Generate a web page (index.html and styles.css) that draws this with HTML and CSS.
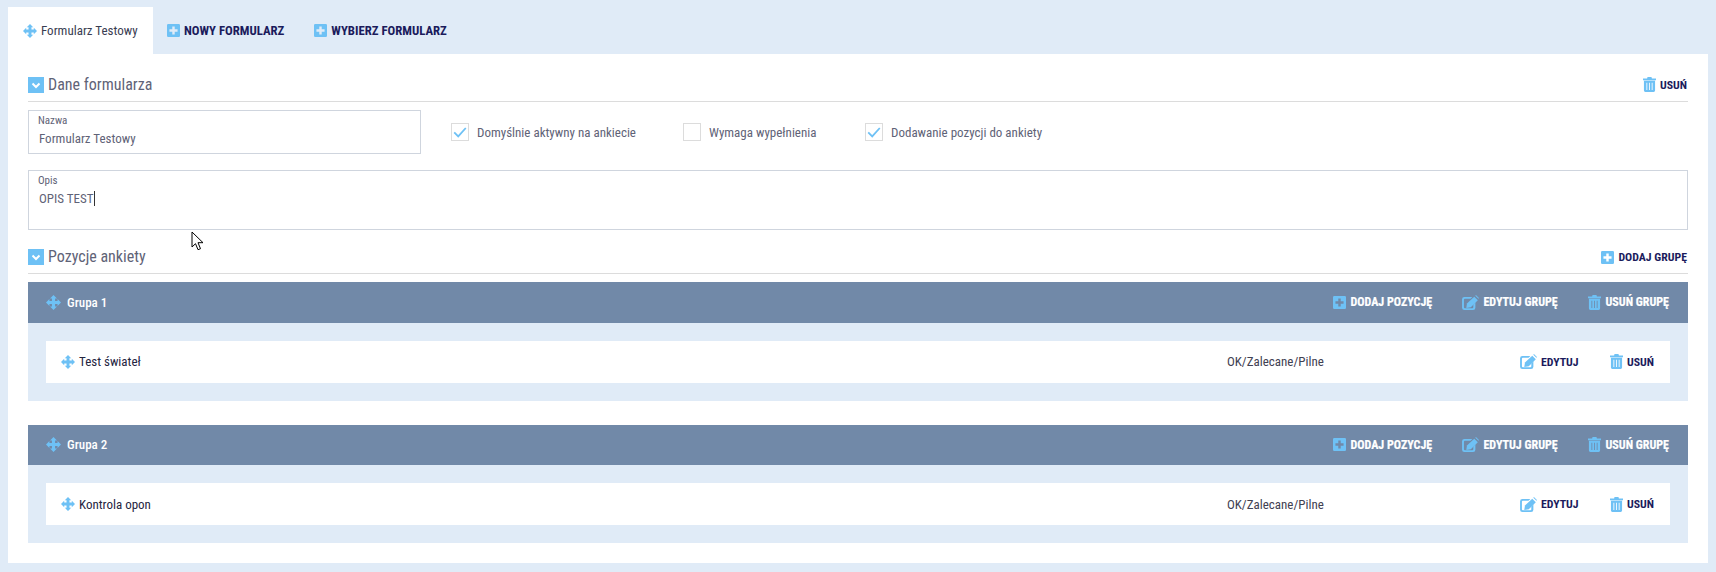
FILE: index.html
```html
<!DOCTYPE html>
<html lang="pl">
<head>
<meta charset="utf-8">
<title>Formularz Testowy</title>
<link rel="stylesheet" href="styles.css">
</head>
<body>
<svg class="defs" width="0" height="0" aria-hidden="true">
  <symbol id="i-move" viewBox="0 0 24 24"><path d="M12 0l5.500 5.500H14.500V9.500H18.500V6.500L24 12l-5.500 5.500V14.500H14.500V18.500H17.500L12 24l-5.500-5.500H9.500V14.500H5.500V17.500L0 12l5.500-5.500V9.500H9.500V5.500H6.500z"/></symbol>
  <symbol id="i-plus" viewBox="0 0 16 16"><path fill-rule="evenodd" d="M1.500 0h13A1.500 1.500 0 0 1 16 1.500v13a1.500 1.500 0 0 1-1.500 1.500h-13A1.500 1.500 0 0 1 0 14.500v-13A1.500 1.500 0 0 1 1.500 0zM6.500 3v3.500H3v3h3.500V13h3V9.500H13v-3H9.500V3z"/></symbol>
  <symbol id="i-edit" viewBox="0 0 18 16"><path d="M2.500 2H11L9 4H3a1 1 0 0 0-1 1V13a1 1 0 0 0 1 1h8a1 1 0 0 0 1-1V10L14.200 7.800v5.700a2.500 2.500 0 0 1-2.500 2.500H2.500A2.500 2.500 0 0 1 0 13.500v-9A2.500 2.500 0 0 1 2.500 2z"/><path d="M13 1.800L16.800 5.600 9.300 13.100 4.500 13.800l.7-4.700z"/><path d="M14.800 0L18 3.200 17.500 3.900 14.100 .7z"/></symbol>
  <symbol id="i-trash" viewBox="0 0 14 16"><path fill-rule="evenodd" d="M0 1.500h4.500V.6L5.100 0h3.800l.6.600V1.500H14V3.400H0zM1 4h12V14.500A1.500 1.500 0 0 1 11.500 16h-9A1.500 1.500 0 0 1 1 14.500zM3.700 6v8h.9V6zM6.550 6v8h.9V6zM9.400 6v8h.9V6z"/></symbol>
</svg>

<nav class="tabs">
  <div class="tab tab-active"><svg class="ico ico-move"><use href="#i-move"/></svg><span>Formularz Testowy</span></div>
  <div class="tab"><svg class="ico ico-plus"><use href="#i-plus"/></svg><span class="act-text tab-text">NOWY FORMULARZ</span></div>
  <div class="tab"><svg class="ico ico-plus"><use href="#i-plus"/></svg><span class="act-text tab-text">WYBIERZ FORMULARZ</span></div>
</nav>

<main class="panel">
  <header class="section-head">
    <span class="toggle"><svg viewBox="0 0 16 16" width="16" height="16"><path d="M4.500 6.500L8 10l3.500-3.500" fill="none" stroke="#fff" stroke-width="2"/></svg></span>
    <h2>Dane formularza</h2>
    <a class="action"><svg class="ico ico-trash"><use href="#i-trash"/></svg><span class="act-text">USUŃ</span></a>
  </header>

  <div class="form-row">
    <div class="field field-name">
      <label>Nazwa</label>
      <div class="value">Formularz Testowy</div>
    </div>
    <div class="check c1"><span class="box"><svg viewBox="0 0 18 18" width="16" height="16"><path d="M2.500 9.500l4.500 4.500 8.500-9.500" fill="none" stroke="#6ec1f5" stroke-width="2"/></svg></span><span>Domyślnie aktywny na ankiecie</span></div>
    <div class="check c2"><span class="box"></span><span>Wymaga wypełnienia</span></div>
    <div class="check"><span class="box"><svg viewBox="0 0 18 18" width="16" height="16"><path d="M2.500 9.500l4.500 4.500 8.500-9.500" fill="none" stroke="#6ec1f5" stroke-width="2"/></svg></span><span>Dodawanie pozycji do ankiety</span></div>
  </div>

  <div class="field field-desc">
    <label>Opis</label>
    <div class="value">OPIS TEST<span class="caret"></span></div>
  </div>

  <header class="section-head section-head-2">
    <span class="toggle"><svg viewBox="0 0 16 16" width="16" height="16"><path d="M4.500 6.500L8 10l3.500-3.500" fill="none" stroke="#fff" stroke-width="2"/></svg></span>
    <h2>Pozycje ankiety</h2>
    <a class="action"><svg class="ico ico-plus"><use href="#i-plus"/></svg><span class="act-text">DODAJ GRUPĘ</span></a>
  </header>

  <section class="group">
    <div class="group-head">
      <svg class="ico ico-move-lg"><use href="#i-move"/></svg>
      <span class="group-title">Grupa 1</span>
      <a class="action a-pos"><svg class="ico ico-plus"><use href="#i-plus"/></svg><span>DODAJ POZYCJĘ</span></a>
      <a class="action a-edit"><svg class="ico ico-edit"><use href="#i-edit"/></svg><span>EDYTUJ GRUPĘ</span></a>
      <a class="action a-del"><svg class="ico ico-trash"><use href="#i-trash"/></svg><span>USUŃ GRUPĘ</span></a>
    </div>
    <div class="group-body">
      <div class="item">
        <svg class="ico ico-move"><use href="#i-move"/></svg>
        <span class="item-name">Test świateł</span>
        <span class="item-type">OK/Zalecane/Pilne</span>
        <a class="action i-edit"><svg class="ico ico-edit"><use href="#i-edit"/></svg><span class="act-text">EDYTUJ</span></a>
        <a class="action i-del"><svg class="ico ico-trash"><use href="#i-trash"/></svg><span class="act-text">USUŃ</span></a>
      </div>
    </div>
  </section>

  <section class="group">
    <div class="group-head">
      <svg class="ico ico-move-lg"><use href="#i-move"/></svg>
      <span class="group-title">Grupa 2</span>
      <a class="action a-pos"><svg class="ico ico-plus"><use href="#i-plus"/></svg><span>DODAJ POZYCJĘ</span></a>
      <a class="action a-edit"><svg class="ico ico-edit"><use href="#i-edit"/></svg><span>EDYTUJ GRUPĘ</span></a>
      <a class="action a-del"><svg class="ico ico-trash"><use href="#i-trash"/></svg><span>USUŃ GRUPĘ</span></a>
    </div>
    <div class="group-body">
      <div class="item">
        <svg class="ico ico-move"><use href="#i-move"/></svg>
        <span class="item-name">Kontrola opon</span>
        <span class="item-type">OK/Zalecane/Pilne</span>
        <a class="action i-edit"><svg class="ico ico-edit"><use href="#i-edit"/></svg><span class="act-text">EDYTUJ</span></a>
        <a class="action i-del"><svg class="ico ico-trash"><use href="#i-trash"/></svg><span class="act-text">USUŃ</span></a>
      </div>
    </div>
  </section>
</main>

<svg class="cursor" width="13" height="20" viewBox="0 0 13 20"><path d="M1 1v15l3.500-3.300 2.500 6 2.500-1-2.500-6H12z" fill="#fff" stroke="#000" stroke-width="1"/></svg>
</body>
</html>
```

FILE: styles.css
```css
* { box-sizing: border-box; }
html, body { margin: 0; height: 100%; }
body {
  position: relative;
  background: #e0ebf7;
  padding: 7px 8px 9px;
  font-family: "Roboto Condensed", "Liberation Sans Narrow", Roboto, sans-serif;
  font-stretch: 75%;
  font-size: 13px;
  color: #5f6377;
  overflow: hidden;
}
.defs { position: absolute; }
.ico { fill: #6ec1f5; flex: none; display: block; }
.ico-move { width: 14px; height: 14px; }
.ico-move-lg { width: 15px; height: 15px; }
.ico-plus { width: 13px; height: 13px; }
.ico-edit { width: 17px; height: 15px; }
.ico-trash { width: 13px; height: 15px; }

.tabs { display: flex; height: 47px; }
.tab {
  display: flex;
  align-items: center;
  gap: 4px;
  padding: 0 16px 0 14px;
  color: #1b1b5c;
  white-space: nowrap;
}
.tab-active {
  width: 145px;
  padding: 0 0 0 15px;
  background: #fff;
  color: #3a3d52;
  gap: 4px;
  font-size: 13px;
}
.act-text { font-weight: 700; color: #1b1b5c; font-size: 11.800px; }
.tab-text { font-size: 12.750px; }

.panel { background: #fff; padding: 20px; height: 509px; }

.section-head {
  display: flex;
  align-items: flex-end;
  height: 28px;
  padding: 0 1px 8px 0;
  border-bottom: 1px solid #dcdcdc;
  margin-bottom: 8px;
}
.section-head-2 { margin-top: 16px; }
.toggle { width: 16px; height: 16px; background: #6ec1f5; margin-right: 4px; display: block; flex: none; }
.toggle svg { display: block; }
h2 { margin: 0 0 -1px; font-size: 16px; line-height: 19px; font-weight: 400; color: #5f6377; flex: 1; }
.action { display: flex; align-items: center; gap: 4px; }
.section-head .action { margin-bottom: 1px; }

.form-row { display: flex; align-items: center; height: 44px; }
.field { border: 1px solid #cfd5de; padding: 3px 9px; background: #fff; }
.field label { display: block; font-size: 11px; line-height: 14px; }
.field .value { font-size: 13px; line-height: 18px; padding-left: 1px; margin-top: 2px; }
.field-name { width: 393px; height: 44px; margin-right: 30px; }
.field-desc { height: 60px; margin-top: 16px; }
.caret { display: inline-block; width: 1px; height: 15px; margin-left: 1px; background: #333; vertical-align: -3px; }

.check { display: flex; align-items: center; gap: 8px; font-size: 13px; }
.c1 { width: 232px; }
.c2 { width: 182px; }
.box { width: 18px; height: 18px; border: 1px solid #dcdcdc; display: block; flex: none; }
.box svg { display: block; }

.group { margin-bottom: 24px; }
.group-head {
  display: flex;
  align-items: center;
  height: 40.500px;
  background: #7189a8;
  padding: 0 19px 0 18px;
  color: #fff;
  font-weight: 700;
  font-size: 12px;
}
.group-head .action span { -webkit-text-stroke: 0.2px #fff; }
.group-title { flex: 1; margin-left: 6px; font-size: 13px; font-weight: 500; }
.a-pos { width: 129px; }
.a-edit { width: 126px; }
.group-body { background: #e0ebf7; padding: 18px; }
.item {
  display: flex;
  align-items: center;
  height: 42px;
  background: #fff;
  padding: 0 16px 0 15px;
}
.item-name { flex: 1; margin-left: 4px; color: #25253f; font-size: 13px; }
.item-type { width: 293px; color: #3f4152; font-size: 13px; }
.i-edit { width: 90px; }

.cursor { position: absolute; left: 191px; top: 231px; }
```
